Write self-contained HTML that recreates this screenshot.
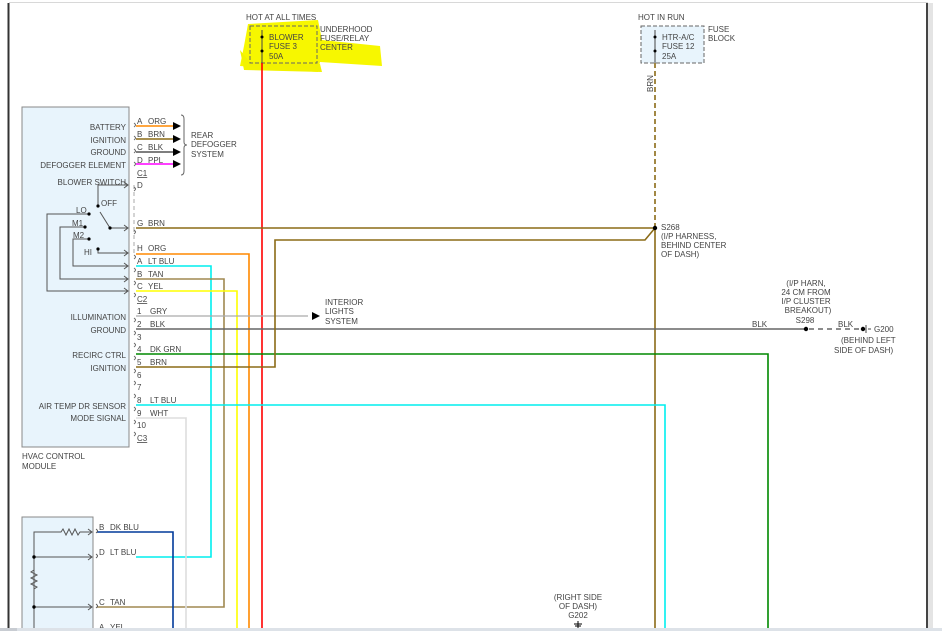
<!DOCTYPE html>
<html><head><meta charset="utf-8"><style>
html,body{margin:0;padding:0;background:#fff;}
svg{display:block;}
text{font-family:"Liberation Sans",sans-serif;font-size:8px;fill:#444;}
</style></head><body>
<svg width="942" height="631" viewBox="0 0 942 631" xmlns="http://www.w3.org/2000/svg">
<rect width="942" height="631" fill="#fff"/>
<!-- frame -->
<line x1="9" y1="2.5" x2="928" y2="2.5" stroke="#d8d8d8" stroke-width="1"/>
<line x1="8.5" y1="3" x2="8.5" y2="631" stroke="#333" stroke-width="2"/>
<line x1="927" y1="3" x2="927" y2="631" stroke="#444" stroke-width="2"/>
<rect x="928" y="3" width="5" height="628" fill="#e4e4e4"/>

<!-- highlight -->
<path d="M248 24 L318 20 L322 40 L380 46 L382 66 L320 62 L318 72 L240 66 L244 46 Z" fill="#f7f700"/>
<path d="M240 50 L250 62 L320 64 L322 72 L244 70Z" fill="#f2f200"/>

<!-- fuse boxes -->
<text x="246" y="20">HOT AT ALL TIMES</text>
<rect x="250" y="26" width="67" height="37" fill="none" stroke="#666" stroke-dasharray="4,2"/>
<line x1="262" y1="30" x2="262" y2="63" stroke="#444"/>
<circle cx="262" cy="37" r="1.5" fill="#000"/><circle cx="262" cy="51" r="1.5" fill="#000"/>
<text x="269" y="40">BLOWER</text><text x="269" y="49">FUSE 3</text><text x="269" y="59">50A</text>
<text x="320" y="32">UNDERHOOD</text><text x="320" y="41">FUSE/RELAY</text><text x="320" y="50">CENTER</text>

<text x="638" y="20">HOT IN RUN</text>
<rect x="641" y="26" width="63" height="37" fill="#e8f4fc" stroke="#666" stroke-dasharray="4,2"/>
<line x1="655" y1="30" x2="655" y2="63" stroke="#444"/>
<circle cx="655" cy="37" r="1.5" fill="#000"/><circle cx="655" cy="51" r="1.5" fill="#000"/>
<text x="662" y="40">HTR-A/C</text><text x="662" y="49">FUSE 12</text><text x="662" y="59">25A</text>
<text x="708" y="32">FUSE</text><text x="708" y="41">BLOCK</text>
<text x="0" y="0" transform="translate(653,92) rotate(-90)">BRN</text>

<!-- vertical wires -->
<line x1="262" y1="63" x2="262" y2="631" stroke="#f00" stroke-width="1.6"/>
<line x1="655" y1="63" x2="655" y2="228" stroke="#8b6b17" stroke-width="1.6" stroke-dasharray="5,3"/>
<line x1="655" y1="228" x2="655" y2="631" stroke="#8b6b17" stroke-width="1.6"/>

<!-- HVAC module -->
<rect x="22" y="107" width="107" height="340" fill="#e8f4fc" stroke="#888"/>
<g text-anchor="end">
<text x="126" y="130">BATTERY</text><text x="126" y="143">IGNITION</text><text x="126" y="155">GROUND</text><text x="126" y="168">DEFOGGER ELEMENT</text>
<text x="126" y="185">BLOWER SWITCH</text>
<text x="126" y="320">ILLUMINATION</text><text x="126" y="333">GROUND</text>
<text x="126" y="358">RECIRC CTRL</text><text x="126" y="371">IGNITION</text>
<text x="126" y="409">AIR TEMP DR SENSOR</text><text x="126" y="421">MODE SIGNAL</text>
</g>
<text x="22" y="459">HVAC CONTROL</text><text x="22" y="469">MODULE</text>

<!-- blower switch -->
<g stroke="#555" fill="none" stroke-width="1">
<path d="M98 206 V185 H128"/><path d="M124 182 L128 185 L124 188"/>
<path d="M100 212 L110 228 H128"/><path d="M124 225 L128 228 L124 231"/>
<path d="M89 214 H47 V291 H128"/><path d="M124 288 L128 291 L124 294"/>
<path d="M85 227 H60 V279 H128"/><path d="M124 276 L128 279 L124 282"/>
<path d="M89 239 H73 V266 H128"/><path d="M124 263 L128 266 L124 269"/>
<path d="M98 249 V253 H128"/><path d="M124 250 L128 253 L124 256"/>
<path d="M134 185 V228 M134 228 V253" stroke-dasharray="4,3" stroke="#aaa"/>
</g>
<g fill="#000"><circle cx="98" cy="206" r="1.6"/><circle cx="110" cy="228" r="1.6"/><circle cx="89" cy="214" r="1.6"/><circle cx="85" cy="227" r="1.6"/><circle cx="89" cy="239" r="1.6"/><circle cx="98" cy="249" r="1.6"/></g>
<text x="101" y="206">OFF</text><text x="76" y="213">LO</text><text x="72" y="226">M1</text><text x="73" y="238">M2</text><text x="84" y="255">HI</text>

<!-- pin brackets -->
<g stroke="#666" fill="none">
<path d="M134 123 q3 2 0 4 M134 136 q3 2 0 4 M134 149 q3 2 0 4 M134 162 q3 2 0 4 M134 187 q3 2 0 4 M134 230 q3 2 0 4 M134 255 q3 2 0 4 M134 268 q3 2 0 4 M134 281 q3 2 0 4 M134 293 q3 2 0 4 M134 318 q3 2 0 4 M134 331 q3 2 0 4 M134 343 q3 2 0 4 M134 356 q3 2 0 4 M134 369 q3 2 0 4 M134 381 q3 2 0 4 M134 394 q3 2 0 4 M134 407 q3 2 0 4 M134 420 q3 2 0 4 M134 432 q3 2 0 4"/>
<path d="M181 115 q3 0 3 4 v23 q0 3 3 3 q-3 0 -3 3 v23 q0 4 -3 4"/>
</g>
<g>
<text x="137" y="124">A</text><text x="148" y="124">ORG</text>
<text x="137" y="137">B</text><text x="148" y="137">BRN</text>
<text x="137" y="150">C</text><text x="148" y="150">BLK</text>
<text x="137" y="163">D</text><text x="148" y="163">PPL</text>
<text x="137" y="176" text-decoration="underline">C1</text>
<text x="137" y="188">D</text>
<text x="137" y="226">G</text><text x="148" y="226">BRN</text>
<text x="137" y="251">H</text><text x="148" y="251">ORG</text>
<text x="137" y="264">A</text><text x="148" y="264">LT BLU</text>
<text x="137" y="277">B</text><text x="148" y="277">TAN</text>
<text x="137" y="289">C</text><text x="148" y="289">YEL</text>
<text x="137" y="302" text-decoration="underline">C2</text>
<text x="137" y="314">1</text><text x="150" y="314">GRY</text>
<text x="137" y="327">2</text><text x="150" y="327">BLK</text>
<text x="137" y="340">3</text>
<text x="137" y="352">4</text><text x="150" y="352">DK GRN</text>
<text x="137" y="365">5</text><text x="150" y="365">BRN</text>
<text x="137" y="378">6</text>
<text x="137" y="390">7</text>
<text x="137" y="403">8</text><text x="150" y="403">LT BLU</text>
<text x="137" y="416">9</text><text x="150" y="416">WHT</text>
<text x="137" y="428">10</text>
<text x="137" y="441" text-decoration="underline">C3</text>
</g>
<text x="191" y="138">REAR</text><text x="191" y="147">DEFOGGER</text><text x="191" y="157">SYSTEM</text>

<!-- defogger wires -->
<g stroke-width="1.6" fill="none">
<line x1="136" y1="126" x2="175" y2="126" stroke="#f80"/>
<line x1="136" y1="139" x2="175" y2="139" stroke="#8b6b17"/>
<line x1="136" y1="152" x2="175" y2="152" stroke="#555"/>
<line x1="136" y1="164" x2="175" y2="164" stroke="#f0f"/>
</g>
<g fill="#000"><path d="M173 122 L181 126 L173 130Z"/><path d="M173 135 L181 139 L173 143Z"/><path d="M173 148 L181 152 L173 156Z"/><path d="M173 160 L181 164 L173 168Z"/></g>

<!-- main wires -->
<g fill="none" stroke-width="1.6">
<path d="M136 228 H655" stroke="#8b6b17"/>
<path d="M136 254 H249 V631" stroke="#f80"/>
<path d="M136 266 H211 V557 H136" stroke="#0ee"/>
<path d="M136 279 H224 V607 H97" stroke="#a08850"/>
<path d="M136 291 H237 V631" stroke="#ff0"/>
<path d="M136 316 H308" stroke="#aaa" stroke-width="1.2"/>
<path d="M136 329 H806" stroke="#666"/>
<path d="M136 354 H768 V631" stroke="#080"/>
<path d="M136 367 H275 V240 H645 L655 228" stroke="#8b6b17"/>
<path d="M136 405 H665 V631" stroke="#0ee"/>
<path d="M136 418 H186 V631" stroke="#ddd"/>
<path d="M97 532 H173 V631" stroke="#013a9a"/>
</g>
<path d="M312 312 L320 316 L312 320Z" fill="#000"/>
<text x="325" y="305">INTERIOR</text><text x="325" y="314">LIGHTS</text><text x="325" y="324">SYSTEM</text>

<!-- S268 -->
<circle cx="655" cy="228" r="2.2" fill="#000"/>
<text x="661" y="230">S268</text><text x="661" y="239">(I/P HARNESS,</text><text x="661" y="248">BEHIND CENTER</text><text x="661" y="257">OF DASH)</text>

<!-- S298 / G200 -->
<text x="752" y="327">BLK</text>
<g text-anchor="middle"><text x="806" y="286">(I/P HARN,</text><text x="806" y="295">24 CM FROM</text><text x="806" y="304">I/P CLUSTER</text><text x="808" y="313">BREAKOUT)</text><text x="805" y="323">S298</text></g>
<circle cx="806" cy="329" r="2.2" fill="#000"/>
<line x1="809" y1="329" x2="862" y2="329" stroke="#666" stroke-width="1.4" stroke-dasharray="5,4"/>
<text x="838" y="327">BLK</text>
<circle cx="863" cy="329" r="2.2" fill="#000"/>
<line x1="866" y1="325" x2="866" y2="333" stroke="#444"/><line x1="868" y1="329" x2="871" y2="329" stroke="#444"/>
<text x="874" y="332">G200</text>
<text x="841" y="343">(BEHIND LEFT</text><text x="834" y="353">SIDE OF DASH)</text>

<!-- bottom sensor box -->
<rect x="22" y="517" width="71" height="114" fill="#e8f4fc" stroke="#888"/>
<g stroke="#555" fill="none">
<path d="M34 631 V532 H61 l2 -3 l3 6 l3 -6 l3 6 l3 -6 l3 6 l2 -3 H92"/>
<path d="M34 557 H92 M34 607 H92"/>
<path d="M34 570 l-3 2 l6 3 l-6 3 l6 3 l-6 3 l6 3 l-3 2"/>
<path d="M88 529 L92 532 L88 535 M88 554 L92 557 L88 560 M88 604 L92 607 L88 610"/>
<path d="M96 529 q3 2 0 4 M96 554 q3 2 0 4 M96 604 q3 2 0 4"/>
</g>
<circle cx="34" cy="557" r="1.7" fill="#000"/><circle cx="34" cy="607" r="1.7" fill="#000"/>
<text x="99" y="530">B</text><text x="110" y="530">DK BLU</text>
<text x="99" y="555">D</text><text x="110" y="555">LT BLU</text>
<text x="99" y="605">C</text><text x="110" y="605">TAN</text>
<text x="99" y="630">A</text><text x="110" y="630">YEL</text>

<!-- G202 -->
<g text-anchor="middle"><text x="578" y="600">(RIGHT SIDE</text><text x="578" y="609">OF DASH)</text><text x="578" y="618">G202</text></g>
<g stroke="#000"><line x1="578" y1="621" x2="578" y2="628"/><line x1="574" y1="624" x2="582" y2="624"/><line x1="575" y1="626" x2="581" y2="626"/></g>

<!-- bottom bar -->
<rect x="0" y="628" width="942" height="3" fill="#dde2e8"/>
<rect x="0" y="628" width="17" height="3" fill="#c8ccd2"/>
</svg>
</body></html>
